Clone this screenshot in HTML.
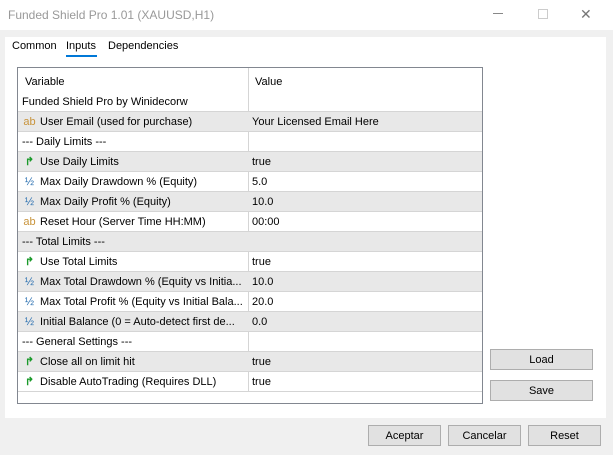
<!DOCTYPE html><html><head><style>
*{margin:0;padding:0;box-sizing:border-box}
body{width:613px;height:455px;background:#f0f0f0;font-family:"Liberation Sans",sans-serif;font-size:11px;color:#000;position:relative;overflow:hidden}
.a{position:absolute}
.title{left:0;top:0;width:613px;height:30px;background:#fff;color:#999;font-size:12px;padding:8px 0 0 8px}
.panel{left:5px;top:37px;width:601px;height:381px;background:#fff}
.tbl{left:17px;top:67px;width:466px;height:337px;border:1px solid #828790;background:#fff}
.row{position:absolute;left:0;width:464px;height:20px;border-bottom:1px solid #d5d5d5}
.row.g{background:#e8e8e8}
.c1{position:absolute;left:4px;top:4px;white-space:nowrap;line-height:12px;height:12px}
.c2{position:absolute;left:234px;top:4px;line-height:12px}
.vl{position:absolute;left:230px;top:0;width:1px;height:324px;background:#d5d5d5}
.btn{position:absolute;background:#e1e1e1;border:1px solid #adadad;text-align:center;font-size:11px;line-height:20px}
.ic{display:inline-block;width:15px;margin-right:3px;text-align:center;line-height:12px;height:12px;vertical-align:top;overflow:visible}
.ab{color:#c8933a}.hf{color:#2a6fb0}.ar{color:#1a9a2a;font-weight:bold}
</style></head><body>
<div class="a title">Funded Shield Pro 1.01 (XAUUSD,H1)</div>
<div class="a" style="left:490px;top:6px;width:13px;height:12px"><div style="position:absolute;top:7px;left:3px;width:10px;height:1px;background:#888"></div></div>
<div class="a" style="left:538px;top:9px;width:10px;height:10px;border:1px solid #ccc"></div>
<div class="a" style="left:580px;top:8px;font-size:14px;color:#777;line-height:12px">✕</div>
<div class="a panel"></div>
<div class="a" style="left:12px;top:40px">Common</div>
<div class="a" style="left:66px;top:40px">Inputs</div>
<div class="a" style="left:66px;top:55px;width:31px;height:2px;background:#0078d7"></div>
<div class="a" style="left:108px;top:40px">Dependencies</div>
<div class="a tbl">
<div class="vl"></div>
<div class="row" style="top:0;height:25px;border:none"><span class="c1" style="top:8px;left:7px">Variable</span><span class="c2" style="top:8px;left:237px">Value</span></div>
<div class="row" style="top:24px"><span class="c1">Funded Shield Pro by Winidecorw</span></div>
<div class="row g" style="top:44px"><span class="c1"><span class="ic ab">ab</span>User Email (used for purchase)</span><span class="c2">Your Licensed Email Here</span></div>
<div class="row" style="top:64px"><span class="c1">--- Daily Limits ---</span></div>
<div class="row g" style="top:84px"><span class="c1"><span class="ic ar">↱</span>Use Daily Limits</span><span class="c2">true</span></div>
<div class="row" style="top:104px"><span class="c1"><span class="ic hf">½</span>Max Daily Drawdown % (Equity)</span><span class="c2">5.0</span></div>
<div class="row g" style="top:124px"><span class="c1"><span class="ic hf">½</span>Max Daily Profit % (Equity)</span><span class="c2">10.0</span></div>
<div class="row" style="top:144px"><span class="c1"><span class="ic ab">ab</span>Reset Hour (Server Time HH:MM)</span><span class="c2">00:00</span></div>
<div class="row g" style="top:164px"><span class="c1">--- Total Limits ---</span></div>
<div class="row" style="top:184px"><span class="c1"><span class="ic ar">↱</span>Use Total Limits</span><span class="c2">true</span></div>
<div class="row g" style="top:204px"><span class="c1"><span class="ic hf">½</span>Max Total Drawdown % (Equity vs Initia...</span><span class="c2">10.0</span></div>
<div class="row" style="top:224px"><span class="c1"><span class="ic hf">½</span>Max Total Profit % (Equity vs Initial Bala...</span><span class="c2">20.0</span></div>
<div class="row g" style="top:244px"><span class="c1"><span class="ic hf">½</span>Initial Balance (0 = Auto-detect first de...</span><span class="c2">0.0</span></div>
<div class="row" style="top:264px"><span class="c1">--- General Settings ---</span></div>
<div class="row g" style="top:284px"><span class="c1"><span class="ic ar">↱</span>Close all on limit hit</span><span class="c2">true</span></div>
<div class="row" style="top:304px"><span class="c1"><span class="ic ar">↱</span>Disable AutoTrading (Requires DLL)</span><span class="c2">true</span></div>
</div>
<div class="btn" style="left:490px;top:349px;width:103px;height:21px">Load</div>
<div class="btn" style="left:490px;top:380px;width:103px;height:21px">Save</div>
<div class="btn" style="left:368px;top:425px;width:73px;height:21px">Aceptar</div>
<div class="btn" style="left:448px;top:425px;width:73px;height:21px">Cancelar</div>
<div class="btn" style="left:528px;top:425px;width:73px;height:21px">Reset</div>
</body></html>
